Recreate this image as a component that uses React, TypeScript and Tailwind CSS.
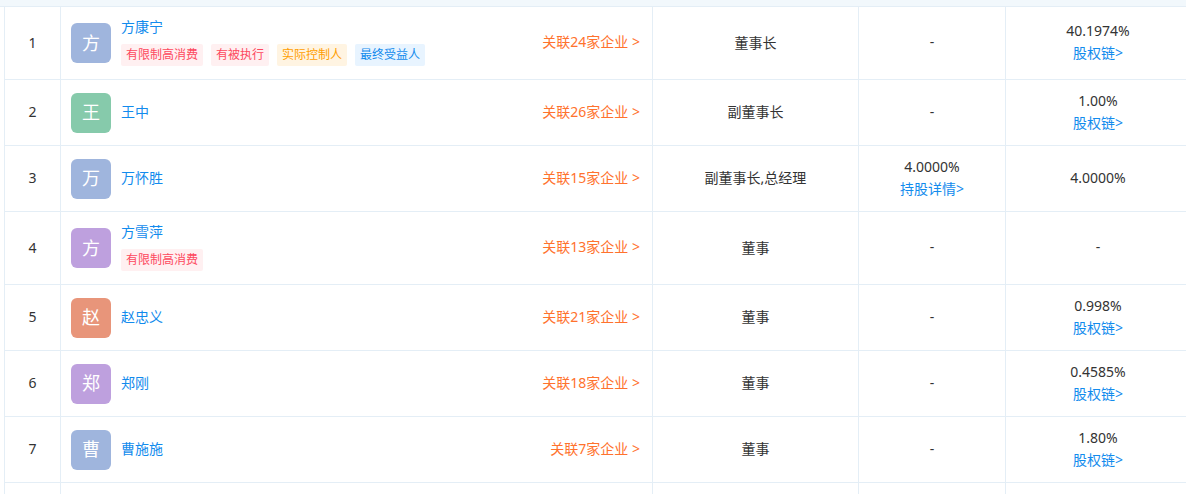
import React from 'react';

type Tag = { text: string; tone: 'red' | 'orange' | 'blue' };

type Row = {
  no: number;
  name: string;
  avatar: string;
  color: string;
  tags?: Tag[];
  related: number;
  role: string;
  direct?: string;
  directLink?: string;
  total: string;
  chain?: boolean;
};

const rows: Row[] = [
  {
    no: 1, name: '方康宁', avatar: '方', color: 'bg-[#9fb5dd]',
    tags: [
      { text: '有限制高消费', tone: 'red' },
      { text: '有被执行', tone: 'red' },
      { text: '实际控制人', tone: 'orange' },
      { text: '最终受益人', tone: 'blue' },
    ],
    related: 24, role: '董事长', total: '40.1974%', chain: true,
  },
  { no: 2, name: '王中', avatar: '王', color: 'bg-[#86caab]', related: 26, role: '副董事长', total: '1.00%', chain: true },
  { no: 3, name: '万怀胜', avatar: '万', color: 'bg-[#9fb5dd]', related: 15, role: '副董事长,总经理', direct: '4.0000%', directLink: '持股详情>', total: '4.0000%' },
  { no: 4, name: '方雪萍', avatar: '方', color: 'bg-[#bea0de]', tags: [{ text: '有限制高消费', tone: 'red' }], related: 13, role: '董事', total: '-' },
  { no: 5, name: '赵忠义', avatar: '赵', color: 'bg-[#e8957a]', related: 21, role: '董事', total: '0.998%', chain: true },
  { no: 6, name: '郑刚', avatar: '郑', color: 'bg-[#bea0de]', related: 18, role: '董事', total: '0.4585%', chain: true },
  { no: 7, name: '曹施施', avatar: '曹', color: 'bg-[#9fb5dd]', related: 7, role: '董事', total: '1.80%', chain: true },
  { no: 8, name: '', avatar: '', color: 'bg-[#8fc6a6]', related: 0, role: '', total: '' },
];

const toneCls: Record<Tag['tone'], string> = {
  red: 'bg-[#fff0f1] text-[#fd485e]',
  orange: 'bg-[#fff4e2] text-[#ff9e00]',
  blue: 'bg-[#e8f4ff] text-[#128bed]',
};

export default function App() {
  return (
    <div
      className="w-[1186px] h-[494px] overflow-hidden bg-white text-[14px] text-[#333]"
      style={{ fontFamily: '"Noto Sans", "Noto Sans CJK SC", sans-serif' }}
    >
      <div className="h-[7px] bg-[#f2f8fc] border-b border-[#e4eef6]" />
      <div className="ml-[4px] border-l border-[#e4eef6] w-[1190px]">
        {rows.map((r) => {
          const tall = !!r.tags;
          return (
            <div
              key={r.no}
              className={`flex border-b border-[#e4eef6] ${tall ? 'h-[73px]' : 'h-[66px]'}`}
            >
              <div className="w-[56px] shrink-0 border-r border-[#e4eef6] flex items-center justify-center pb-[2px]">
                {r.name && r.no}
              </div>
              <div className="w-[592px] shrink-0 border-r border-[#e4eef6] flex items-center pl-[10px] pr-[12px]">
                <div className={`w-[40px] h-[40px] rounded-[6px] ${r.color} text-white text-[18px] flex items-center justify-center`}>
                  {r.avatar}
                </div>
                <div className="ml-[10px] flex flex-col">
                  <span className={`text-[#128bed] leading-[18px] ${tall ? '-mt-[2px]' : '-mt-[2px]'}`}>{r.name}</span>
                  {r.tags && (
                    <div className="flex gap-[8px] mt-[8px]">
                      {r.tags.map((t) => (
                        <span
                          key={t.text}
                          className={`h-[22px] px-[5px] rounded-[2px] text-[12px] leading-[22px] ${toneCls[t.tone]}`}
                        >
                          {t.text}
                        </span>
                      ))}
                    </div>
                  )}
                </div>
                {r.related > 0 && (
                  <span className="ml-auto text-[#ff722d] pb-[3px]">
                    关联{r.related}家企业 &gt;
                  </span>
                )}
              </div>
              <div className="w-[206px] shrink-0 border-r border-[#e4eef6] flex items-center justify-center pb-[2px]">
                {r.role}
              </div>
              <div className="w-[147px] shrink-0 border-r border-[#e4eef6] flex flex-col items-center justify-center leading-[22px] pb-[2px]">
                {r.name && (r.direct ?? '-')}
                {r.directLink && <span className="text-[#128bed]">{r.directLink}</span>}
              </div>
              <div className="w-[184px] shrink-0 flex flex-col items-center justify-center leading-[22px] pb-[2px]">
                {r.total}
                {r.chain && <span className="text-[#128bed]">股权链&gt;</span>}
              </div>
            </div>
          );
        })}
      </div>
    </div>
  );
}
